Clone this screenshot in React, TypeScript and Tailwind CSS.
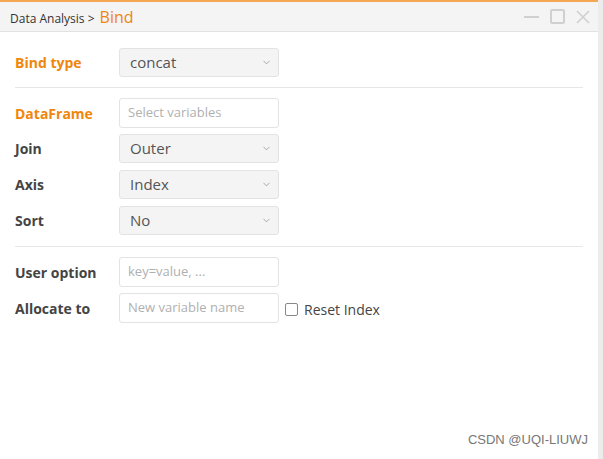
import { ChevronDown } from 'lucide-react'

const font = { fontFamily: '"Open Sans", "Noto Sans", sans-serif' }

function Select({ value }: { value: string }) {
  return (
    <div className="flex h-[29px] w-[160px] items-center justify-between rounded-[3px] border border-[#e3e3e3] bg-[#f4f4f4] pl-[10px] pr-[6px] text-[15px] text-[#555]">
      <span>{value}</span>
      <ChevronDown className="h-[11px] w-[11px] text-[#888]" strokeWidth={1.5} />
    </div>
  )
}

function Input({ placeholder }: { placeholder: string }) {
  return (
    <div className="flex h-[30px] w-[160px] items-center rounded-[3px] border border-[#e3e3e3] bg-white pl-[8px] text-[13px] text-[#b0b0b0]">
      {placeholder}
    </div>
  )
}

function Row({ label, orange, children, className = '' }: { label: string; orange?: boolean; children: React.ReactNode; className?: string }) {
  return (
    <div className={`flex items-center ${className}`}>
      <div className={`w-[104px] text-[14px] font-bold ${orange ? 'text-[#f0860c]' : 'text-[#444]'}`}>{label}</div>
      {children}
    </div>
  )
}

export default function App() {
  return (
    <div className="flex h-[459px] w-[603px] bg-[#ececec]" style={font}>
      <div className="flex w-[598px] flex-col border-t-2 border-[#f6a754] bg-white">
        <div className="flex h-[30px] items-center justify-between border-b border-[#e2e2e2] bg-[#f4f4f4] pl-[10px] pr-[8px]">
          <div className="flex items-baseline gap-[5px]">
            <span className="text-[12px] text-[#333]">Data Analysis &gt;</span>
            <span className="text-[16px] text-[#f0860c]">Bind</span>
          </div>
          <div className="flex items-center gap-[11px]">
            <div className="h-[2px] w-[15px] bg-[#d0d0d0]" />
            <div className="h-[15px] w-[15px] rounded-[2px] border-2 border-[#d0d0d0]" />
            <svg width="14" height="14" viewBox="0 0 14 14" stroke="#d0d0d0" strokeWidth="1.6">
              <path d="M1 1 L13 13 M13 1 L1 13" />
            </svg>
          </div>
        </div>
        <div className="flex flex-col px-[15px] pt-[16px]">
          <Row label="Bind type" orange>
            <Select value="concat" />
          </Row>
          <div className="mb-[10px] mt-[10px] h-px bg-[#e6e6e6]" />
          <Row label="DataFrame" orange>
            <Input placeholder="Select variables" />
          </Row>
          <Row label="Join" className="mt-[6px]">
            <Select value="Outer" />
          </Row>
          <Row label="Axis" className="mt-[7px]">
            <Select value="Index" />
          </Row>
          <Row label="Sort" className="mt-[7px]">
            <Select value="No" />
          </Row>
          <div className="mb-[10px] mt-[11px] h-px bg-[#e6e6e6]" />
          <Row label="User option">
            <Input placeholder="key=value, ..." />
          </Row>
          <Row label="Allocate to" className="mt-[6px]">
            <Input placeholder="New variable name" />
            <div className="ml-[6px] mt-[2px] flex items-center gap-[6px]">
              <div className="h-[13px] w-[13px] rounded-[2px] border border-[#888] bg-white" />
              <span className="text-[14px] text-[#444]">Reset Index</span>
            </div>
          </Row>
        </div>
        <div className="mt-auto flex justify-end pb-[10px] pr-[10px]">
          <span className="text-[13px] text-[#777]" style={{ fontFamily: '"Liberation Sans", sans-serif' }}>CSDN @UQI-LIUWJ</span>
        </div>
      </div>
    </div>
  )
}
